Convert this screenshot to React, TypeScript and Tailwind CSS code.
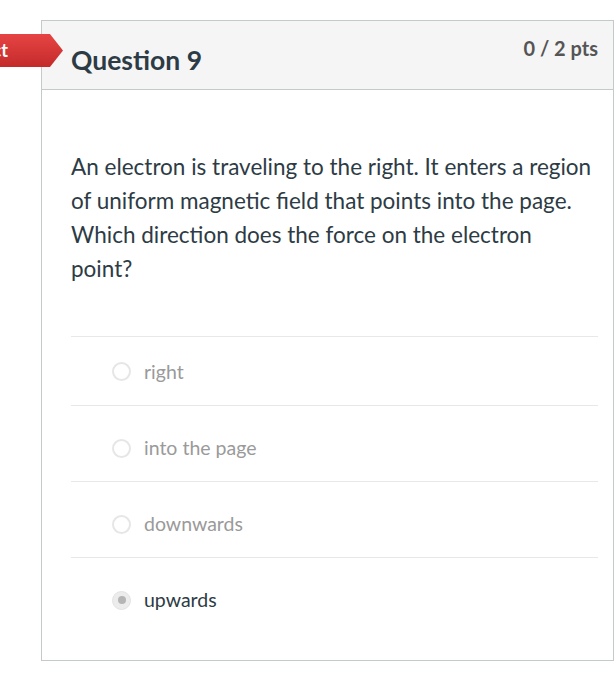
import React from "react";

const answers = [
  { label: "right", selected: false },
  { label: "into the page", selected: false },
  { label: "downwards", selected: false },
  { label: "upwards", selected: true },
];

export default function App() {
  return (
    <div
      className="min-h-[700px] w-[614px] bg-white pt-[20px] pl-[41px] overflow-hidden"
      style={{ fontFamily: "Lato, 'Open Sans', sans-serif" }}
    >
      <div className="relative border border-[#c4c9cc] bg-white h-[641px]">
        {/* Incorrect flag */}
        <div
          className="absolute top-[13px] left-[-142px] w-[163px] h-[33px] flex items-center justify-end pr-[55px] text-white font-bold text-[18px] bg-gradient-to-b from-[#e64444] to-[#c42a2a]"
          style={{ clipPath: "polygon(0 0, 92% 0, 100% 50%, 92% 100%, 0 100%)" }}
        >
          Incorrect
        </div>
        {/* Header */}
        <div className="h-[69px] bg-[#f5f5f5] border-b border-[#c4c9cc] flex justify-between pl-[29px] pr-[15px]">
          <div className="pt-[22px] text-[26.5px] font-bold text-[#2d3b45] leading-[34px]">
            Question 9
          </div>
          <div className="pt-[14px] text-[20px] font-bold text-[#555555] leading-[26px]">
            0 / 2 pts
          </div>
        </div>
        {/* Body */}
        <div className="pl-[29px] pr-[15px]">
          <p className="pt-[60px] pb-[50px] text-[22.5px] leading-[34px] text-[#2d3b45]">
            An electron is traveling to the right. It enters a region of uniform magnetic field that points into the page. Which direction does the force on the electron point?
          </p>
          <div className="flex flex-col">
            {answers.map((a, i) => (
              <div
                key={a.label}
                className={
                  "border-t border-[#e8e8e8] flex items-center pl-[41px] gap-[13px] " +
                  (i === 0 ? "h-[69px] pt-[1px]" : "h-[76px] pt-[9px]")
                }
              >
                {a.selected ? (
                  <span className="w-[19px] h-[19px] rounded-full border border-[#e3e3e3] bg-[#ececec] flex items-center justify-center">
                    <span className="w-[8px] h-[8px] rounded-full bg-[#b5b5b5]" />
                  </span>
                ) : (
                  <span className="w-[19px] h-[19px] rounded-full border-2 border-[#e6e6e6] bg-white" />
                )}
                <span
                  className={
                    "text-[19.5px] leading-[24px] " +
                    (a.selected ? "text-[#2d3b45]" : "text-[#9a9a9a]")
                  }
                >
                  {a.label}
                </span>
              </div>
            ))}
          </div>
        </div>
      </div>
    </div>
  );
}
